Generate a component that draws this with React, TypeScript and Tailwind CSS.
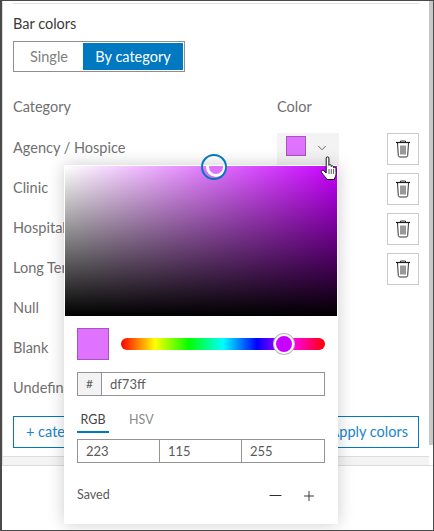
import { ChevronDown, Minus, Plus } from 'lucide-react';

const categories = ['Agency / Hospice', 'Clinic', 'Hospital', 'Long Term Care', 'Null', 'Blank', 'Undefined'];

// 垃圾桶按钮只显示前四行
function TrashButton() {
  return (
    <button className="flex h-8 w-8 items-center justify-center border border-[#cacaca] bg-white">
      <svg width="16" height="18" viewBox="0 0 16 18" fill="none" stroke="#1c1c1c" strokeWidth="0.9">
        <path d="M5.500 2.500V1h5v1.500" />
        <path d="M1 2.500h14" strokeWidth="1.200" />
        <path d="M2.500 3l.8 12.600c.1.900.6 1.400 1.400 1.400h6.600c.8 0 1.300-.5 1.400-1.400L13.500 3" />
        <path d="M6 5.500v9M8 5.500v9M10 5.500v9" />
      </svg>
    </button>
  );
}

function HandCursor() {
  return (
    <svg width="20" height="26" viewBox="0 0 20 26" className="absolute left-[318px] top-[155px]">
      <path
        d="M6.200 2c0-1.500 2.700-1.500 2.700 0v7.400c.3-1 2.300-1 2.400.3v.8c.3-1 2.200-.9 2.300.3v.9c.4-.9 2.200-.7 2.300.6l.2 4.900c0 2.900-1.200 4-1.900 6.300H6.900C5.800 21.200 3.400 19.200 1.500 16.400c-1-1.600 1-3 2.300-1.700l2.400 2.300V2z"
        fill="#fff"
        stroke="#111"
        strokeWidth="1"
      />
      <path d="M9 13v5M11.300 13v5M13.600 13v5" stroke="#333" strokeWidth="0.8" />
    </svg>
  );
}

function ColorPopover() {
  return (
    <div className="absolute left-[62px] top-[164px] h-[359px] w-[274px] bg-white pt-px shadow-[0_0_16px_rgba(0,0,0,0.2)]">
      <div className="relative mx-px h-[150px] overflow-hidden bg-[linear-gradient(to_top,#000,transparent),linear-gradient(to_right,#fff,#c800ff)]">
        <div className="absolute left-[141px] top-[-9px] h-5 w-5 rounded-full border-[3px] border-white bg-[#df73ff]" />
      </div>
      <div className="absolute left-[137px] top-[-11px] h-[26px] w-[26px] rounded-full border-2 border-[#0079c1]" />

      <div className="px-[13px]">
        <div className="mt-3 flex items-center gap-3">
          <div className="h-8 w-8 border border-[#a855b8] bg-[#df73ff]" />
          <div className="relative h-3 w-[204px] rounded-full bg-[linear-gradient(to_right,#f00,#ff0,#0f0,#0ff,#00f,#f0f,#f00)]">
            <div className="absolute left-[153px] top-[-4px] h-5 w-5 rounded-full border-2 border-white bg-[#c800ff] shadow-[0_0_0_1px_#bbb]" />
          </div>
        </div>

        <div className="mt-3 flex h-6 w-[248px] border border-[#949494] text-[13px] text-[#5a5a5a]">
          <div className="flex w-6 items-center justify-center border-r border-[#949494] bg-[#f3f3f3] text-[12px]">#</div>
          <div className="pl-2 leading-[22px]">df73ff</div>
        </div>

        <div className="mt-3 flex text-[12.5px]">
          <div className="h-[25px] w-8 border-b-2 border-[#0079c1] text-center leading-6 text-[#444]">RGB</div>
          <div className="ml-5 leading-6 text-[#8a8a8a]">HSV</div>
        </div>

        <div className="mt-[6px] grid h-6 w-[248px] grid-cols-3 border border-[#949494] text-[13px] leading-[22px] text-[#5a5a5a]">
          <div className="border-r border-[#949494] pl-2">223</div>
          <div className="border-r border-[#949494] pl-2">115</div>
          <div className="pl-2">255</div>
        </div>

        <div className="mt-[23px] flex items-center justify-between text-[12.5px] text-[#5a5a5a]">
          <span>Saved</span>
          <div className="mr-2 flex items-center gap-4 text-[#222]">
            <Minus size={19} strokeWidth={1.2} />
            <Plus size={16} strokeWidth={1.3} />
          </div>
        </div>
      </div>
    </div>
  );
}

export default function App() {
  return (
    <div
      className="relative h-[531px] w-[434px] overflow-hidden border-t border-r border-b border-l-2 border-[#4a4a4a] bg-white text-[14.5px] text-[#707070]"
      style={{ fontFamily: 'Lato, "Liberation Sans", sans-serif' }}
    >
      <div className="flex h-[465px] border-b border-l border-[#dcdcdc]">
        <div className="flex min-w-0 flex-1 flex-col">
          <div className="flex-1 pl-[10px] pr-[10px] pt-[2px]">
            <div className="h-px bg-[#e0e0e0]" />
            <div className="mt-[10px] leading-5 text-[#3a3a3a]">Bar colors</div>
            <div className="mt-[7px] flex h-[31px] w-[172px] border border-[#8f8f8f] p-px">
              <div className="flex w-[68px] items-center justify-center text-[#808080]">Single</div>
              <div className="flex flex-1 items-center justify-center bg-[#0079c1] text-white">By category</div>
            </div>

            <div className="mt-[25px] flex h-5 items-center">
              <span className="w-[264px]">Category</span>
              <span>Color</span>
            </div>

            <div className="mt-[16px] flex flex-col">
              {categories.map((name, i) => (
                <div key={name} className="flex h-10 items-start">
                  <span className="w-[264px] pt-[5px] leading-5">{name}</span>
                  {i === 0 && (
                    <div className="flex h-[33px] w-[62px] items-start bg-[#f3f3f3] pl-[9px] pt-[3px]">
                      <div className="h-5 w-5 border border-[#a855b8] bg-[#df73ff]" />
                      <ChevronDown size={14} strokeWidth={1.5} className="ml-[9px] mt-[5px] text-[#555]" />
                    </div>
                  )}
                  {i > 0 && i < 4 && <div className="w-[62px]" />}
                  {i < 4 && (
                    <div className="ml-auto">
                      <TrashButton />
                    </div>
                  )}
                </div>
              ))}
            </div>

            <div className="mt-[3px] flex justify-between">
              <button className="h-8 w-[130px] border border-[#0079c1] pl-3 text-left text-[#1a86c8]">+ category</button>
              <button className="h-8 w-[130px] border border-[#0079c1] pr-[10px] text-right text-[#1a86c8]">Apply colors</button>
            </div>
          </div>
          <div className="h-[9px] border-t border-[#dcdcdc] bg-[#f4f4f4]" />
        </div>
        <div className="h-[444px] w-1 bg-[#c8c8c8]" />
      </div>

      <ColorPopover />
      <HandCursor />
    </div>
  );
}
